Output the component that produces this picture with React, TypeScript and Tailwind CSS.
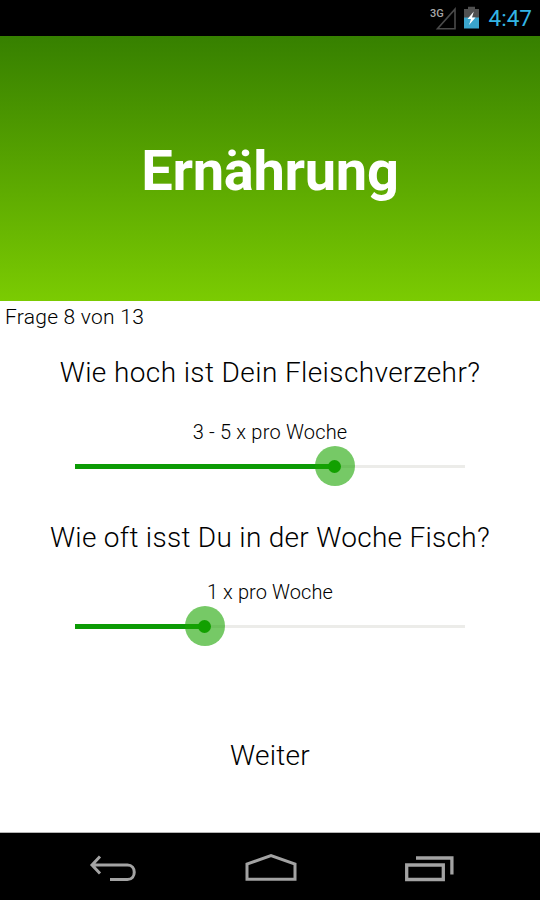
import { useState } from 'react';

const SLIDER_MAX = 3;

function SignalIcon() {
  return (
    <svg width="28" height="24" viewBox="0 0 28 24" aria-hidden="true">
      <text x="0" y="10.5" fontSize="11" fontWeight="500" fill="#a8a8a8" fontFamily="Roboto, sans-serif">
        3G
      </text>
      <path d="M25 3.2V22.7H7.5Z" fill="none" stroke="#4a4a4a" strokeWidth="1.6" />
    </svg>
  );
}

function BatteryIcon() {
  return (
    <svg width="15" height="24" viewBox="0 0 15 24" aria-hidden="true">
      <path d="M4 0.7H11V3H15V12H0V3H4Z" fill="#505050" />
      <path d="M0 11.5H15V22.5H0Z" fill="#3aa5cc" />
      <path d="M9.8 5.5L3.5 13H7L5 19L11.5 11.5H8Z" fill="#fff" />
    </svg>
  );
}

function StatusBar() {
  return (
    <div className="flex h-9 shrink-0 items-center justify-end bg-black pr-2">
      <SignalIcon />
      <div className="ml-1.5 flex">
        <BatteryIcon />
      </div>
      <span className="ml-2.5 pt-px text-[22.5px] leading-none text-[#33b5e5]">4:47</span>
    </div>
  );
}

interface SliderProps {
  value: number;
  onChange: (value: number) => void;
  label: string;
}

function Slider({ value, onChange, label }: SliderProps) {
  const percent = `${(value / SLIDER_MAX) * 100}%`;

  return (
    <div className="relative mx-[75px] flex h-10 items-center">
      <div className="h-[3px] w-full bg-[#ecece9]" />
      <div className="absolute left-0 h-[5px] bg-[#0c9b05]" style={{ width: percent }} />
      <div
        className="absolute flex size-10 -translate-x-1/2 items-center justify-center rounded-full bg-[#1aa500]/60"
        style={{ left: percent }}
      >
        <div className="size-[13px] rounded-full bg-[#12a000]" />
      </div>
      <input
        type="range"
        min={0}
        max={SLIDER_MAX}
        value={value}
        aria-label={label}
        onChange={(e) => onChange(Number(e.target.value))}
        className="absolute inset-0 w-full cursor-pointer opacity-0"
      />
    </div>
  );
}

function NavigationBar() {
  return (
    <nav className="flex h-[68px] shrink-0 items-center justify-between border-t border-[#b5b5b5] bg-black pt-px pr-[86px] pl-[89px]">
      <button type="button" aria-label="Zurück">
        <svg width="48" height="30" viewBox="0 0 48 30" fill="none" stroke="#a3a3a3" strokeWidth="3">
          <path d="M11 4.5L3 13L11 21.5M2.5 13H38.5C47.5 13 47.5 27.5 38.5 27.5H21" />
        </svg>
      </button>
      <button type="button" aria-label="Startseite">
        <svg width="52" height="30" viewBox="0 0 52 30" fill="none" stroke="#a3a3a3" strokeWidth="3">
          <path d="M2 27.2V12L26 3.6L50 12V27.2Z" />
        </svg>
      </button>
      <button type="button" aria-label="Letzte Apps">
        <svg width="50" height="30" viewBox="0 0 50 30" fill="none" stroke="#a3a3a3" strokeWidth="3.3">
          <path d="M2.7 13H39.3V27.5H2.7ZM12 6H47.9V22.5" />
        </svg>
      </button>
    </nav>
  );
}

const MEAT_LABELS = ['nie', '1 - 2 x pro Woche', '3 - 5 x pro Woche', 'täglich'];
const FISH_LABELS = ['nie', '1 x pro Woche', '2 - 3 x pro Woche', 'täglich'];

export default function App() {
  const [meat, setMeat] = useState(2);
  const [fish, setFish] = useState(1);

  return (
    <div className="flex h-[900px] w-[540px] flex-col overflow-hidden bg-white font-['Roboto',sans-serif] text-black">
      <StatusBar />
      <header className="flex h-[265px] shrink-0 items-center justify-center bg-linear-to-b from-[#368000] to-[#7bcb02] pt-1">
        <h1 className="text-[56px] leading-none font-bold tracking-[-0.3px] text-white">Ernährung</h1>
      </header>

      <main className="flex flex-1 flex-col text-center whitespace-nowrap">
        <p className="pt-1 pl-[5px] text-left text-[21px] leading-6 font-light tracking-[0.25px]">Frage 8 von 13</p>

        <h2 className="mt-[26px] text-[28px] leading-9 font-light tracking-[0.4px]">Wie hoch ist Dein Fleischverzehr?</h2>
        <p className="mt-[29px] text-[20px] leading-6 font-light tracking-[0.2px]">{MEAT_LABELS[meat]}</p>
        <div className="mt-[2px]">
          <Slider value={meat} onChange={setMeat} label="Fleischverzehr" />
        </div>

        <h2 className="mt-[34px] text-[28px] leading-9 font-light tracking-[0.3px]">Wie oft isst Du in der Woche Fisch?</h2>
        <p className="mt-[24px] text-[20px] leading-6 font-light tracking-[0.1px]">{FISH_LABELS[fish]}</p>
        <div className="mt-[2px]">
          <Slider value={fish} onChange={setFish} label="Fisch pro Woche" />
        </div>

        <button type="button" className="mx-auto mt-[92px] text-[28px] leading-9 font-light tracking-[0.3px]">
          Weiter
        </button>
      </main>

      <NavigationBar />
    </div>
  );
}
